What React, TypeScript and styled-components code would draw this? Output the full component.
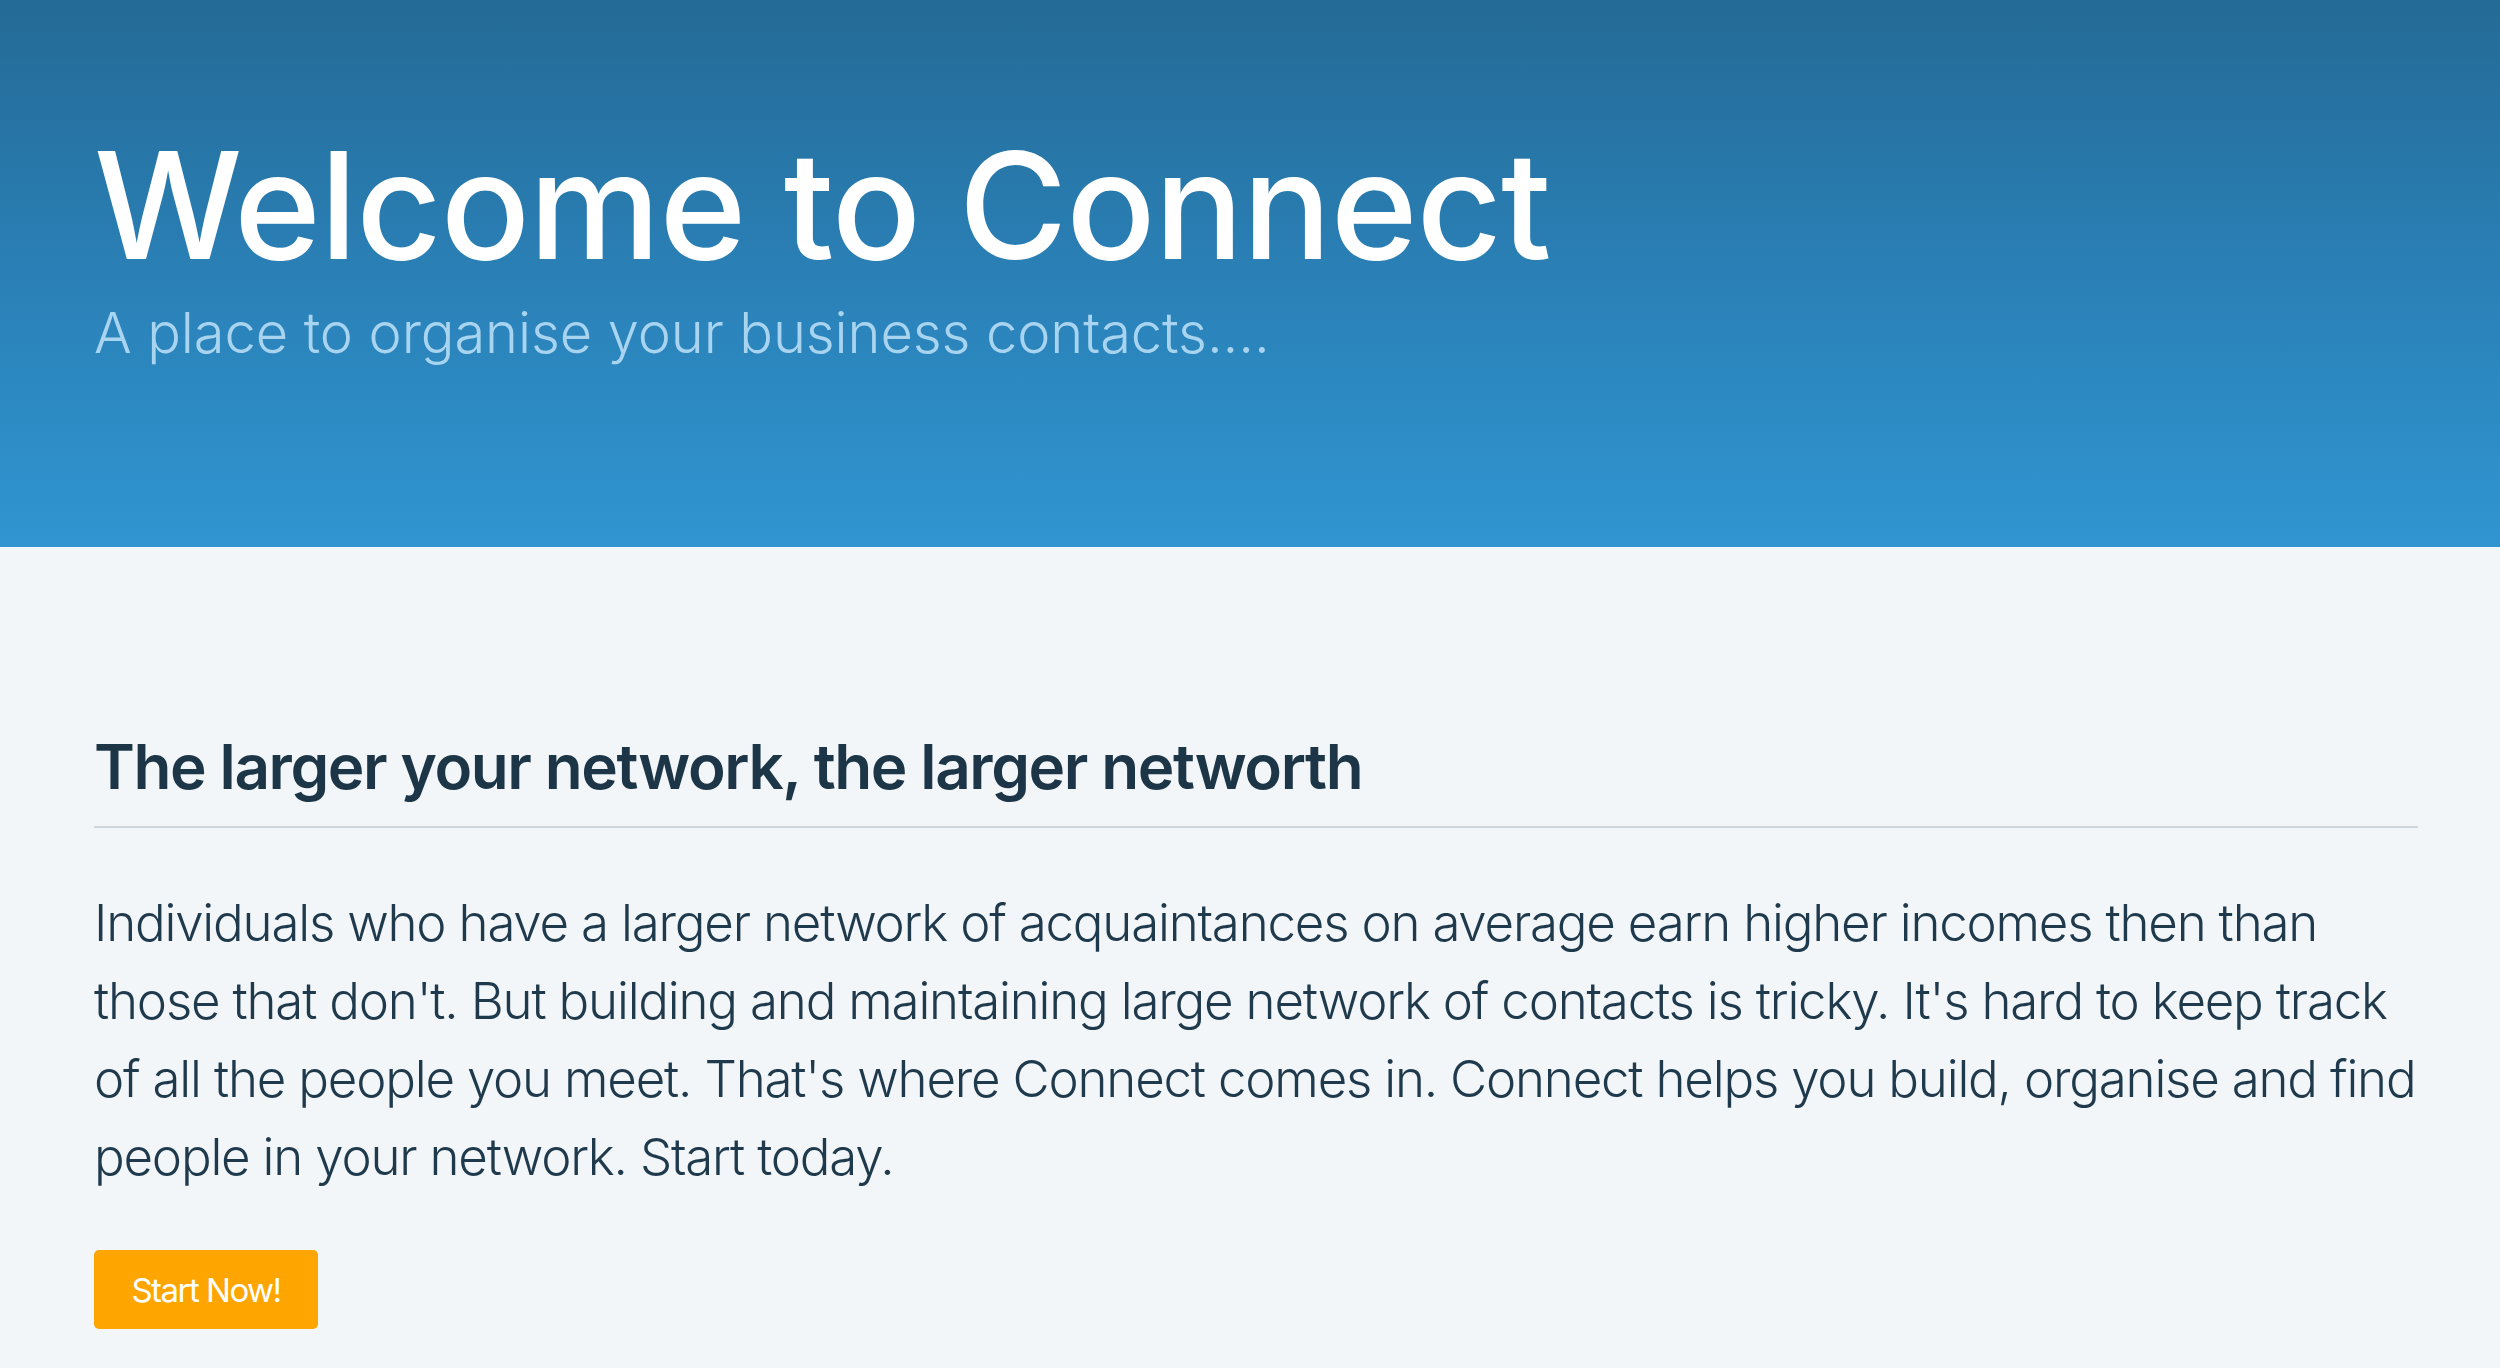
import React from "react";
import styled, { createGlobalStyle } from "styled-components";

const GlobalStyle = createGlobalStyle`
  html, body {
    margin: 0;
    padding: 0;
    background: #f3f6f9;
  }
  body {
    min-height: 100vh;
    font-family: Inter, "Liberation Sans", Arial, sans-serif;
  }
  * { box-sizing: border-box; }
`;

const Page = styled.div`
  min-height: 100vh;
  background: #f3f6f9;
`;

const Hero = styled.header`
  height: 547px;
  padding: 132px 82px 0 94px;
  background: linear-gradient(180deg, #246a96 0%, #2a80b6 50%, #3095d1 100%);
`;

const Title = styled.h1`
  margin: 0;
  font-family: Inter, "Liberation Sans", sans-serif;
  font-weight: 500;
  font-size: 148px;
  line-height: 148px;
  color: #ffffff;
  letter-spacing: -1px;
  white-space: nowrap;
`;

const Subtitle = styled.p`
  margin: 25px 0 0;
  font-family: Inter, "Liberation Sans", sans-serif;
  font-weight: 300;
  font-size: 56px;
  line-height: 56px;
  color: #a8d4f0;
  letter-spacing: -0.1px;
  white-space: nowrap;
`;

const Main = styled.main`
  padding: 189px 82px 40px 94px;
`;

const Heading = styled.h2`
  margin: 0;
  padding-bottom: 28px;
  border-bottom: 2px solid #cfd7dd;
  font-family: Inter, "Liberation Sans", sans-serif;
  font-weight: 600;
  font-size: 62px;
  line-height: 62px;
  color: #1d3647;
  letter-spacing: -1.4px;
`;

const Body = styled.p`
  margin: 56px 0 0;
  font-family: Inter, "Liberation Sans", sans-serif;
  font-weight: 300;
  font-size: 51px;
  line-height: 78px;
  color: #1f3a4c;
  letter-spacing: -1.2px;
  white-space: nowrap;
`;

const Button = styled.button`
  margin-top: 54px;
  width: 224px;
  height: 79px;
  display: inline-flex;
  align-items: center;
  justify-content: center;
  border: none;
  border-radius: 5px;
  background: #ffa500;
  color: #ffffff;
  font-family: Inter, "Liberation Sans", sans-serif;
  font-weight: 400;
  font-size: 33px;
  letter-spacing: -1.5px;
  cursor: pointer;
`;

const lines = [
  "Individuals who have a larger network of acquaintances on average earn higher incomes then than",
  "those that don't. But building and maintaining large network of contacts is tricky. It's hard to keep track",
  "of all the people you meet. That's where Connect comes in. Connect helps you build, organise and find",
  "people in your network. Start today.",
];

export default function App() {
  return (
    <Page>
      <GlobalStyle />
      <Hero>
        <Title>Welcome to Connect</Title>
        <Subtitle>A place to organise your business contacts....</Subtitle>
      </Hero>
      <Main>
        <Heading>The larger your network, the larger networth</Heading>
        <Body>
          {lines.map((l, i) => (
            <React.Fragment key={i}>
              {l}
              {i < lines.length - 1 && <br />}
            </React.Fragment>
          ))}
        </Body>
        <Button>Start Now!</Button>
      </Main>
    </Page>
  );
}
